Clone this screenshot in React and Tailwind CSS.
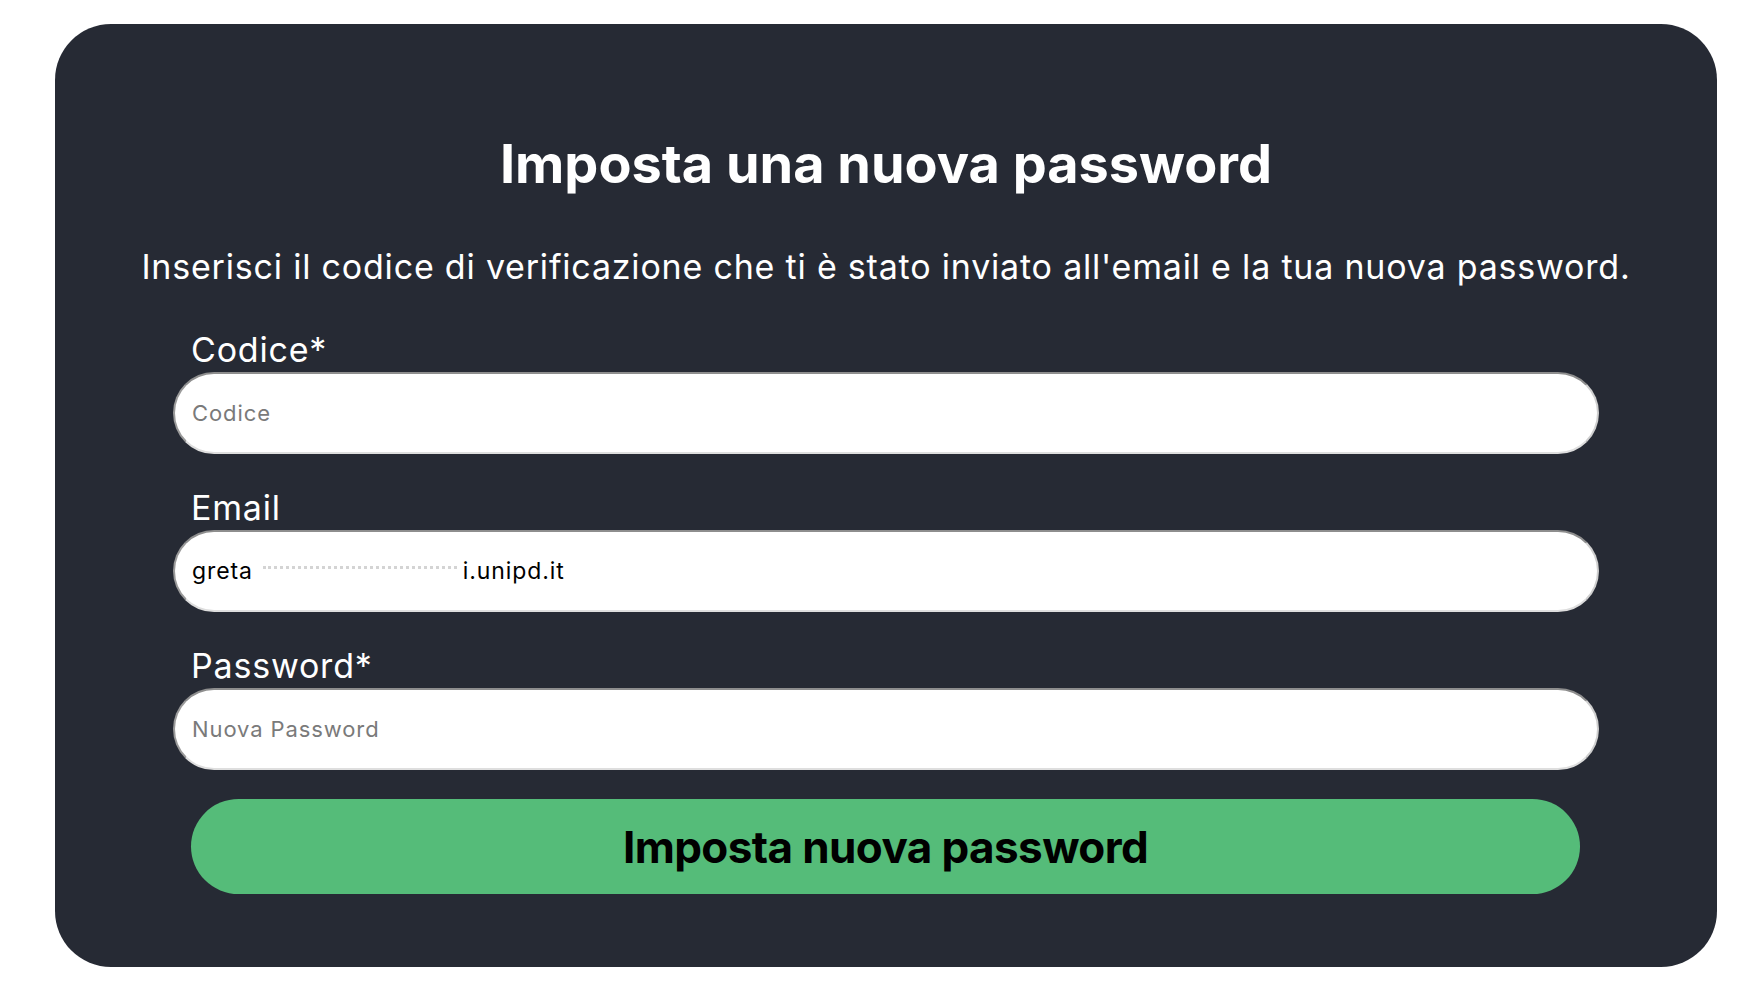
import { useState } from 'react';

const inputBox =
  'w-full h-[82px] rounded-full bg-white border-2 border-t-[#8e8e8e] border-l-[#9a9a9a] border-r-[#cfcfcf] border-b-[#dedede] pl-[17px] pr-6 text-[22px] tracking-[0.9px] text-black outline-none placeholder:text-[#7a7a7a]';

const Field = ({ label, children }) => (
  <div className="flex flex-col">
    <label className="pl-[18px] mb-[5px] text-[34px] tracking-[0.8px] leading-none text-white">{label}</label>
    {children}
  </div>
);

const App = () => {
  const [code, setCode] = useState('');
  const [password, setPassword] = useState('');

  return (
    <div className="min-h-screen bg-white font-['Inter',sans-serif] pt-[24px] pl-[55px]">
      <div className="w-[1662px] h-[943px] bg-[#262a34] rounded-[56px] pt-[113px] px-[118px]">
        <h1 className="text-center text-white text-[54px] leading-none font-bold">
          Imposta una nuova password
        </h1>
        <p className="mt-[59px] -mx-[40px] text-center text-white text-[34px] tracking-[0.8px] leading-none">
          Inserisci il codice di verificazione che ti è stato inviato all'email e la tua nuova password.
        </p>

        <div className="mt-[49px] flex flex-col gap-[37px]">
          <Field label="Codice*">
            <input
              className={inputBox}
              placeholder="Codice"
              value={code}
              onChange={e => setCode(e.target.value)}
            />
          </Field>
          <Field label="Email">
            <div className={`${inputBox} flex items-center text-[23px]`}>
              <span>greta</span>
              <span className="relative w-[202px] h-[22px] ml-[8px]">
                <span className="absolute left-[2px] right-[6px] top-[6px] border-t-[3px] border-dotted border-[#d4d4d4]" />
              </span>
              <span>i.unipd.it</span>
            </div>
          </Field>
          <Field label="Password*">
            <input
              type="password"
              className={inputBox}
              placeholder="Nuova Password"
              value={password}
              onChange={e => setPassword(e.target.value)}
            />
          </Field>
        </div>

        <button className="mt-[29px] mx-[18px] w-[1389px] h-[95px] rounded-full bg-[#55bc79] text-black text-[44px] leading-none font-bold tracking-[-0.6px]">
          Imposta nuova password
        </button>
      </div>
    </div>
  );
};

export default App;
